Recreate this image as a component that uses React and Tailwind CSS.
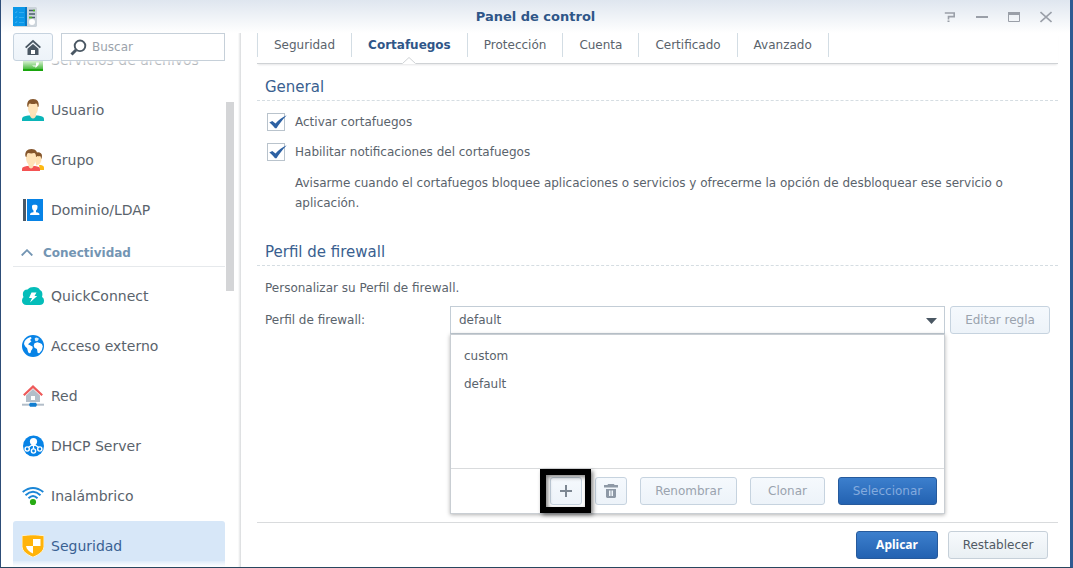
import React from "react";

const svgProps = { width: 22, height: 22, viewBox: "0 0 22 22", "aria-hidden": true, className: "shrink-0" };

const SharedFolderIcon = () => (
  <svg {...svgProps}>
    <defs>
      <linearGradient id="share" x1="0" y1="0" x2="0" y2="1">
        <stop offset="0" stopColor="#4fc23a" />
        <stop offset="1" stopColor="#17a50b" />
      </linearGradient>
    </defs>
    <path d="M1 3h8l2 2h10v17H1z" fill="url(#share)" />
    <path d="M10 16.500h4v-3h3l-.5 2.500-3 3v-1.500c-1.500 0-2.500 0-3.500-1z" fill="#fff" />
  </svg>
);

const UserIcon = () => (
  <svg {...svgProps}>
    <path d="M0 22v-2.500C.5 17.500 2.500 17 6 16.500h10c3.500.5 5.500 1 6 3V22z" fill="#0bb5b8" />
    <path d="M8 12h6v4.500c0 1-1.500 3-3 3s-3-2-3-3z" fill="#fde0b5" />
    <path d="M6 3h10v6c0 4-2.200 7-5 7s-5-3-5-7z" fill="#ffe3b8" />
    <path d="M5.300 7.500C4.800 3 6.500 0 11 0s6.200 3 5.700 7.500l-1 .5c-.2-2-.5-3.500-1.700-3.500-2 .7-4 .7-6 0C6.700 4.500 6.500 6 6.300 8z" fill="#85562c" />
  </svg>
);

const GroupIcon = () => (
  <svg {...svgProps}>
    <path d="M17 16h2c2 .5 3 1 3 3v2h-4z" fill="#fdb913" />
    <path d="M13 5c2-1.500 6-1.500 6.500 1.500.4 4.500-.5 7.500-2.500 9l-3 1z" fill="#ffe0b0" />
    <path d="M13 4c3-1.500 7-1 7 3l-.5 3c-.7-1-.5-2.500-1.500-3-1.500.5-3.500.2-5-1z" fill="#85562c" />
    <path d="M0 22v-2.500C.5 18 2 17.500 5 17h8c3.500.5 5 1 5 3v2z" fill="#f45353" />
    <path d="M6.500 12h5v5c0 1-1.500 2.500-2.500 2.500S6.500 18 6.500 17z" fill="#fde0b5" />
    <path d="M4 3h10.500v6c0 4-2.500 7.500-5.300 7.500S4 13 4 9z" fill="#ffe3b8" />
    <path d="M3.500 7.500C2.500 3 5 0 9.500 0S16 3 15 7.500l-1 .5c0-2-.5-4-2-4-2 .6-3.500.6-5.500 0-1.500 0-1.700 2-2 4z" fill="#85562c" />
  </svg>
);

const DomainIcon = () => (
  <svg {...svgProps}>
    <path d="M1 0h3v22H1z" fill="#4a5866" />
    <path d="M5 0h16v22H5z" fill="#0783e6" />
    <path d="M10 7C10 5.200 15.500 5.200 15.500 7 15.500 9.500 15.300 10.500 14 11.500v1.700c2.500.4 3.500.8 3.500 2.800h-9.500c0-2 1-2.400 3.500-2.800v-1.700C10.200 10.500 10 9.500 10 7z" fill="#fff" />
  </svg>
);

const QuickConnectIcon = () => (
  <svg {...svgProps}>
    <path d="M4.500 20C1.800 20 0 18.200 0 15.800c0-1.800.5-2.900 1.500-3.600C-.2 8 1.500 4.500 5.500 4.500 7 2.800 9 2 12 2s4.800.8 6 3c2.200 1 3 3.500 2 7 1.500.8 2 2.200 2 3.900 0 2.500-1.800 4.100-4.500 4.100z" fill="#04bdb9" />
    <path d="M9.500 7.500h5L12.500 11h2.700L8 17.500l2-4.500H7z" fill="#fff" />
  </svg>
);

const GlobeIcon = () => (
  <svg {...svgProps}>
    <circle cx="11" cy="11" r="11" fill="#0783e6" />
    <path d="M2.500 6.500C4 4 6.500 2.300 9 2l.5 1.500L8 5l1.500 1.200L7.500 8 6 9.200 7.500 10l3 1.500c.8 1.500-.5 3-1.300 4L8.500 18l-1.500.2C5.500 16.500 5.700 14.500 5 13 3.500 12 2.500 10.500 2 9z" fill="#fff" />
    <path d="M12.500 8.300l2.800-1 2.500.6 2 1.100 1 2.300-1 4-2.500 3-1.600-.4-.8-4-2.400-1.200-.8-2.300z" fill="#fff" />
    <path d="M12.800 3l2-.5 2.200 1.300L15.500 6l-2 .3-.6-1.500z" fill="#d8eefc" />
  </svg>
);

const NetworkIcon = () => (
  <svg {...svgProps}>
    <path d="M11 4l7 6.500V17H4v-6.500z" fill="#b3bec9" />
    <path d="M9 11h4v4H9z" fill="#fff" />
    <path d="M1.800 10.300L11 1.600l9.200 8.700" fill="none" stroke="#ee5a5a" strokeWidth="2.200" />
    <path d="M0 18.700h22v2H0z" fill="#b3bec9" />
    <path d="M8 17.800h6l1 2-1 2H8l-1-2z" fill="#117dd0" />
  </svg>
);

const DhcpIcon = () => (
  <svg {...svgProps}>
    <circle cx="11.500" cy="11" r="10.500" fill="#0783e6" />
    <circle cx="11.500" cy="6.500" r="3.600" fill="#fff" />
    <path d="M9.500 8h4v3h-4z" fill="#fff" />
    <path d="M11.500 10v5M10 10l-4.500 3M13 10l4.500 3" stroke="#fff" strokeWidth="1.300" />
    <g fill="#0783e6" stroke="#fff" strokeWidth="1.400">
      <circle cx="5.200" cy="14" r="2.100" />
      <circle cx="11.500" cy="16" r="2.100" />
      <circle cx="17.800" cy="14" r="2.100" />
    </g>
  </svg>
);

const WifiIcon = () => (
  <svg {...svgProps}>
    <g fill="none" stroke="#1b86d6" strokeWidth="1.900">
      <path d="M.7 7Q11-1 21.300 7" />
      <path d="M3.500 10.200Q11 3.500 18.500 10.200" />
      <path d="M6.500 13.200Q11 8.800 15.500 13.200" />
    </g>
    <circle cx="11" cy="17" r="3.100" fill="#27ab14" />
  </svg>
);

const ShieldIcon = () => (
  <svg {...svgProps}>
    <path d="M0 .7C4 .3 8-.2 11-.2s7 .5 11 .9v10.500c0 5-5 8.500-11 11C5 19.700 0 16.200 0 11.200z" fill="#ffb30a" stroke="#fff3d2" strokeWidth="1" />
    <path d="M11 4h7.500v7H11z" fill="#fff" />
    <path d="M4 11h7v7.500C7.500 17 4.500 14.500 4 11z" fill="#fff" />
  </svg>
);

const AppIcon = () => (
  <svg width="24" height="20" viewBox="0 0 24 20" aria-hidden="true">
    <path d="M1 0h22l1 1v18l-1 1H1z" fill="#cbd3da" />
    <path d="M0 0h14v19H0z" fill="#0a97e8" />
    <path d="M12 0h2v19h-2z" fill="#0878c4" />
    <path d="M2 5l1 1 1-2M2 10l1 1 1-2M2 15l1 1 1-2M6 5.500h5M6 10.500h5M6 15.500h5" fill="none" stroke="#3fb0f0" strokeWidth=".8" />
    <path d="M16 3.500h6M16 7h6M16 10.500h6" stroke="#4b5d6d" strokeWidth="1.500" />
    <path d="M20 3.500h2M16 10.500h3" stroke="#4cba1c" strokeWidth="1.500" />
    <circle cx="19" cy="15" r="3" fill="#fff" />
  </svg>
);

const connectivity = [
  ["QuickConnect", QuickConnectIcon],
  ["Acceso externo", GlobeIcon],
  ["Red", NetworkIcon],
  ["DHCP Server", DhcpIcon],
  ["Inalámbrico", WifiIcon],
  ["Seguridad", ShieldIcon],
];
const sharing = [
  ["Servicios de archivos", SharedFolderIcon],
  ["Usuario", UserIcon],
  ["Grupo", GroupIcon],
  ["Dominio/LDAP", DomainIcon],
];

function NavItem({ label, Icon, active }) {
  return (
    <a
      href="#"
      aria-current={active ? "page" : undefined}
      className={
        "flex h-[50px] shrink-0 items-center gap-[7px] rounded-[3px] pl-[9px] text-[14px] whitespace-nowrap " +
        (active ? "bg-[#d7e7f8] text-[#3a6193]" : "text-[#5a636c]")
      }
    >
      <Icon />
      {label}
    </a>
  );
}

function Button({ children, variant = "plain", className = "", ...rest }) {
  const look = {
    plain: "border-[#c6d0d9] bg-linear-to-b from-[#f7fafd] to-[#e9eff3] text-[#505a64]",
    soft: "border-[#c6d3df] bg-linear-to-b from-[#f5f9fd] to-[#edf3f9]",
    disabled: "border-[#c6d3df] bg-linear-to-b from-[#f5f9fd] to-[#edf3f9] text-[#9aa3ae]",
    primary: "border-[#265a9c] bg-linear-to-b from-[#3c7fcd] to-[#2362b1] font-['Noto_Sans',sans-serif] font-bold text-white",
    primaryDisabled: "border-[#265a9c] bg-linear-to-b from-[#3c7fcd] to-[#2362b1] text-[#84abde]",
  }[variant];
  return (
    <button
      type="button"
      disabled={variant === "disabled" || variant === "primaryDisabled"}
      className={"flex h-7 items-center justify-center rounded-[3px] border " + look + " " + className}
      {...rest}
    >
      {children}
    </button>
  );
}

function CheckRow({ children }) {
  return (
    <label className="flex h-[30px] items-center">
      <span className="relative mr-[10px] flex">
        <input type="checkbox" defaultChecked className="peer size-[18px] appearance-none border border-[#b9c3cc] bg-white" />
        <svg className="pointer-events-none absolute top-0.5 left-0.5 hidden peer-checked:block" width="18" height="14" viewBox="0 0 18 14" aria-hidden="true">
          <path d="M.3 7.500l3-1.500 3.200 2.600C9 5.500 13 2.300 17.700.2 13 5 10 9.500 7.500 13.300H6C4.500 11.300 2.500 9 .3 7.500z" fill="#2d61a3" />
        </svg>
      </span>
      {children}
    </label>
  );
}

const tabs = ["Seguridad", "Cortafuegos", "Protección", "Cuenta", "Certificado", "Avanzado"];

function SectionTitle({ children }) {
  return (
    <h2 className="border-b border-dashed border-[#d5dde2] pb-0.5 pl-2 text-[15px] leading-[22px] text-[#3a5f90]">{children}</h2>
  );
}

export default function App() {
  return (
    <div className="flex h-screen flex-col overflow-hidden border-r-[3px] border-b border-l border-r-[#2f5b92] border-b-[#29475f] border-l-[#2d4d78] bg-white font-['DejaVu_Sans',Verdana,sans-serif] text-[12px] text-[#5a636c]">
      <header className="grid h-[33px] shrink-0 grid-cols-[1fr_auto_1fr] items-center bg-linear-to-b from-[#dfe6ef] to-white px-3">
        <AppIcon />
        <h1 className="text-[13px] font-bold text-[#2f5688]">Panel de control</h1>
        <div className="flex justify-end gap-5 pr-1.5 text-[#9a9fa8]">
          <button type="button" aria-label="Ayuda">
            <svg width="12" height="12" viewBox="0 0 12 12" fill="none" stroke="currentColor" strokeWidth="1.600">
              <path d="M.8 2h9.400v3.600H4.500v2.800M3.500 10.300h2" />
            </svg>
          </button>
          <button type="button" aria-label="Minimizar">
            <svg width="12" height="12" viewBox="0 0 12 12"><path d="M0 5h12v2H0z" fill="currentColor" /></svg>
          </button>
          <button type="button" aria-label="Maximizar">
            <svg width="12" height="12" viewBox="0 0 12 12" fill="none" stroke="currentColor"><path d="M.5 1.500h11v9H.5z" /><path d="M0 2.500h12" strokeWidth="3" /></svg>
          </button>
          <button type="button" aria-label="Cerrar">
            <svg width="12" height="12" viewBox="0 0 12 12" fill="none" stroke="currentColor" strokeWidth="1.600"><path d="M.5 1l11 10M11.500 1L.5 11" /></svg>
          </button>
        </div>
      </header>

      <div className="flex min-h-0 flex-1">
        <aside className="flex w-[237px] shrink-0 flex-col">
          <div className="flex shrink-0 gap-2 pl-3">
            <Button aria-label="Inicio" variant="soft" className="w-10">
              <svg width="16" height="16" viewBox="0 0 16 16" aria-hidden="true">
                <path d="M0 8L8 .8 16 8l-1.300 1.300L8 3.300 1.300 9.300z" fill="#4a5763" />
                <path d="M8 5l5.500 4.800V16H2.500V9.800z" fill="#4a5763" />
                <path d="M6 11h4v4H6z" fill="#fff" />
              </svg>
            </Button>
            <label className="flex h-7 w-[164px] items-center gap-[5px] border border-[#c6d0d9] bg-white pl-2">
              <svg width="17" height="17" viewBox="0 0 17 17" aria-hidden="true">
                <circle cx="10" cy="6.800" r="5.300" fill="none" stroke="#4a5763" strokeWidth="1.900" />
                <path d="M6 11l-4.500 4.500" stroke="#4a5763" strokeWidth="3" />
              </svg>
              <input type="search" aria-label="Buscar" placeholder="Buscar" className="min-w-0 flex-1 bg-transparent outline-none placeholder:text-[#9ba3ab]" />
            </label>
          </div>
          <div className="flex min-h-0 flex-1">
            <nav className="relative ml-3 w-[212px] overflow-hidden">
              <div className="-mt-[26px] flex flex-col">
                {sharing.map(([label, Icon]) => <NavItem key={label} label={label} Icon={Icon} />)}
                <button type="button" className="mb-1 flex h-8 shrink-0 items-center gap-2.5 border-b border-[#e6e9ec] pt-1 pl-2 font-bold text-[#7395b3]">
                  <svg width="12" height="7" viewBox="0 0 12 7" fill="none" stroke="currentColor" strokeWidth="1.800" aria-hidden="true">
                    <path d="M.7 6.500L6 1.200l5.300 5.300" />
                  </svg>
                  Conectividad
                </button>
                {connectivity.map(([label, Icon]) => <NavItem key={label} label={label} Icon={Icon} active={label === "Seguridad"} />)}
              </div>
              <div className="pointer-events-none absolute inset-x-0 top-0 h-2 bg-linear-to-b from-white/80 to-white/20" />
              <div className="pointer-events-none absolute inset-x-0 bottom-0 h-1.5 bg-linear-to-b from-white/20 to-white" />
            </nav>
            <div className="ml-px pt-[41px]"><div className="h-[189px] w-2 bg-[#d4d5d7]" /></div>
          </div>
        </aside>

        <div className="w-[3px] shrink-0 bg-linear-to-r from-white to-[#d9dbdd]" />

        <main className="flex min-w-0 flex-1 flex-col pr-3 pl-4">
          <div role="tablist" className="flex shrink-0 border-b border-[#cfd2d5] pb-1.5 shadow-[0_2px_2px_-1px_#e6e7e8]">
            {tabs.map((tab) => {
              const active = tab === "Cortafuegos";
              return (
                <button
                  key={tab}
                  type="button"
                  role="tab"
                  aria-selected={active}
                  className={"relative h-6 border-l border-[#d3dde4] px-4 last:border-r " + (active ? "font-bold text-[#2f5688]" : "")}
                >
                  {tab}
                  {active && (
                    <svg className="absolute top-6 left-1/2 -translate-x-1/2" width="14" height="7" viewBox="0 0 14 7" aria-hidden="true">
                      <path d="M0 7L7 0l7 7z" fill="#fff" />
                      <path d="M.5 6.500L7 .5l6.500 6" fill="#fff" stroke="#cfd2d5" />
                    </svg>
                  )}
                </button>
              );
            })}
          </div>

          <section className="mt-3 shrink-0">
            <SectionTitle>General</SectionTitle>
            <div className="pt-1.5 pl-[10px]">
              <CheckRow>Activar cortafuegos</CheckRow>
              <CheckRow>Habilitar notificaciones del cortafuegos</CheckRow>
              <p className="max-w-[750px] pt-1.5 pl-7 leading-5">
                Avisarme cuando el cortafuegos bloquee aplicaciones o servicios y ofrecerme la opción de desbloquear ese servicio o aplicación.
              </p>
            </div>
          </section>

          <section className="mt-7 shrink-0">
            <SectionTitle>Perfil de firewall</SectionTitle>
            <p className="pt-3 pl-2 leading-5">Personalizar su Perfil de firewall.</p>
            <div className="mt-2 flex items-center pr-2 pl-2">
              <label htmlFor="profile" className="w-[185px] shrink-0">Perfil de firewall:</label>
              <div className="relative min-w-0 flex-1">
                <select id="profile" defaultValue="default" className="block h-7 w-full appearance-none border border-[#c3cdd6] bg-white pl-2 outline-none">
                  <option>custom</option>
                  <option>default</option>
                </select>
                <svg className="pointer-events-none absolute top-3 right-2" width="11" height="6" viewBox="0 0 11 6" aria-hidden="true">
                  <path d="M0 0h11L5.500 6z" fill="#4a5763" />
                </svg>
                <div className="absolute inset-x-0 top-full z-10 flex h-[180px] flex-col border border-[#c9ced3] bg-white shadow-[0_1px_4px_rgba(0,0,0,0.3)]">
                  <ul role="listbox" aria-label="Perfiles" className="flex-1 pt-[7px]">
                    <li role="option" aria-selected="false" className="flex h-7 items-center px-[13px]">custom</li>
                    <li role="option" aria-selected="true" className="flex h-7 items-center px-[13px]">default</li>
                  </ul>
                  <div className="flex justify-end gap-[13px] border-t border-[#d9dbdd] pt-2 pr-[7px] pb-2">
                    <div className="relative">
                      <Button variant="soft" aria-label="Agregar" className="w-8">
                        <svg width="12" height="12" viewBox="0 0 12 12" aria-hidden="true"><path d="M5 0h2v5h5v2H7v5H5V7H0V5h5z" fill="#7d8792" /></svg>
                      </Button>
                      <div className="pointer-events-none absolute -inset-y-2 -right-[9px] -left-[10px] border-[6px] border-black drop-shadow-[2px_2px_2px_rgba(0,0,0,0.5)]" />
                    </div>
                    <Button variant="disabled" aria-label="Eliminar" className="w-8">
                      <svg width="14" height="14" viewBox="0 0 14 14" fill="#8e99a6" aria-hidden="true">
                        <path d="M0 1h3.500l.5-1h6l.5 1H14v2.500H0z" />
                        <path fillRule="evenodd" d="M2 5h10v8l-1 1H3l-1-1zM5 6.500V12h1.500V6.500zM7.500 6.500V12H9V6.500z" />
                      </svg>
                    </Button>
                    <Button variant="disabled" className="w-[97px]">Renombrar</Button>
                    <Button variant="disabled" className="w-[75px]">Clonar</Button>
                    <Button variant="primaryDisabled" className="w-[99px]">Seleccionar</Button>
                  </div>
                </div>
              </div>
              <Button variant="disabled" className="ml-[5px] w-[100px] shrink-0">Editar regla</Button>
            </div>
          </section>

          <footer className="mt-auto flex shrink-0 justify-end gap-2.5 border-t border-[#d9dbdd] pt-2 pr-2.5 pb-2">
            <Button variant="primary" className="w-[82px]">Aplicar</Button>
            <Button className="w-[100px]">Restablecer</Button>
          </footer>
        </main>
      </div>
    </div>
  );
}
